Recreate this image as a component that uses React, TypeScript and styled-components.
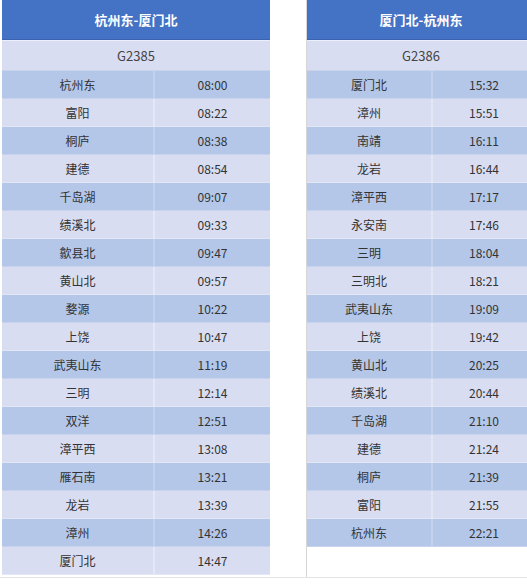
import React from "react";
import styled, { createGlobalStyle } from "styled-components";

const Global = createGlobalStyle`
  html, body { margin: 0; padding: 0; background: #fff; }
  body { width: 527px; height: 584px; overflow: hidden; font-family: "Noto Sans CJK SC", "Noto Sans", sans-serif; }
`;

const Page = styled.div`
  display: flex;
  align-items: flex-start;
  width: 527px;
  height: 577px;
  box-sizing: content-box;
  overflow: hidden;
  border-bottom: 1px solid #e3e3e3;
`;

const Table = styled.div<{ $w: number; $frame?: boolean }>`
  width: ${(p) => p.$w}px;
  flex-shrink: 0;
  display: flex;
  flex-direction: column;
  height: 577px;
  ${(p) => (p.$frame ? "border-left: 1px solid #d6d6d6;" : "")}
  margin-left: ${(p) => (p.$frame ? "36px" : "2px")};
`;

const Title = styled.div`
  height: 40px;
  background: #4472c4;
  border-bottom: 1px solid #3d63b0;
  box-sizing: border-box;
  display: flex;
  align-items: center;
  justify-content: center;
  color: #fff;
  font-weight: 700;
  font-size: 13px;
`;

const Train = styled.div`
  height: 31px;
  box-sizing: border-box;
  background: #d9ddf1;
  border-top: 1px solid #eceff9;
  border-bottom: 1px solid #c9d3ec;
  display: flex;
  align-items: center;
  justify-content: center;
  color: #444;
  font-size: 13px;
`;

const Row = styled.div<{ $dark: boolean; $c1: number }>`
  height: 28px;
  box-sizing: border-box;
  display: grid;
  grid-template-columns: ${(p) => p.$c1}px 1fr;
  background: ${(p) => (p.$dark ? "#b4c7e9" : "#d9ddf1")};
  border-bottom: 1px solid ${(p) => (p.$dark ? "#c8d3ee" : "#e3e6f5")};
  color: #333;
  font-size: 12px;
`;

const Cell = styled.div<{ $dark: boolean; $first?: boolean }>`
  display: flex;
  align-items: center;
  justify-content: center;
  ${(p) => (p.$first ? `border-right: 2px solid ${p.$dark ? "#c4d1ee" : "#e4e7f5"};` : "")}
`;

const left: [string, string][] = [
  ["杭州东", "08:00"],
  ["富阳", "08:22"],
  ["桐庐", "08:38"],
  ["建德", "08:54"],
  ["千岛湖", "09:07"],
  ["绩溪北", "09:33"],
  ["歙县北", "09:47"],
  ["黄山北", "09:57"],
  ["婺源", "10:22"],
  ["上饶", "10:47"],
  ["武夷山东", "11:19"],
  ["三明", "12:14"],
  ["双洋", "12:51"],
  ["漳平西", "13:08"],
  ["雁石南", "13:21"],
  ["龙岩", "13:39"],
  ["漳州", "14:26"],
  ["厦门北", "14:47"],
];

const right: [string, string][] = [
  ["厦门北", "15:32"],
  ["漳州", "15:51"],
  ["南靖", "16:11"],
  ["龙岩", "16:44"],
  ["漳平西", "17:17"],
  ["永安南", "17:46"],
  ["三明", "18:04"],
  ["三明北", "18:21"],
  ["武夷山东", "19:09"],
  ["上饶", "19:42"],
  ["黄山北", "20:25"],
  ["绩溪北", "20:44"],
  ["千岛湖", "21:10"],
  ["建德", "21:24"],
  ["桐庐", "21:39"],
  ["富阳", "21:55"],
  ["杭州东", "22:21"],
];

function Timetable(props: { title: string; train: string; rows: [string, string][]; w: number; c1: number; frame?: boolean }) {
  return (
    <Table $w={props.w} $frame={props.frame}>
      <Title>{props.title}</Title>
      <Train>{props.train}</Train>
      {props.rows.map(([s, t], i) => (
        <Row key={s + t} $dark={i % 2 === 0} $c1={props.c1}>
          <Cell $dark={i % 2 === 0} $first>{s}</Cell>
          <Cell $dark={i % 2 === 0}>{t}</Cell>
        </Row>
      ))}
    </Table>
  );
}

export default function App() {
  return (
    <>
      <Global />
      <Page>
        <Timetable title="杭州东-厦门北" train="G2385" rows={left} w={268} c1={153} />
        <Timetable title="厦门北-杭州东" train="G2386" rows={right} w={228} c1={126} frame />
      </Page>
    </>
  );
}
